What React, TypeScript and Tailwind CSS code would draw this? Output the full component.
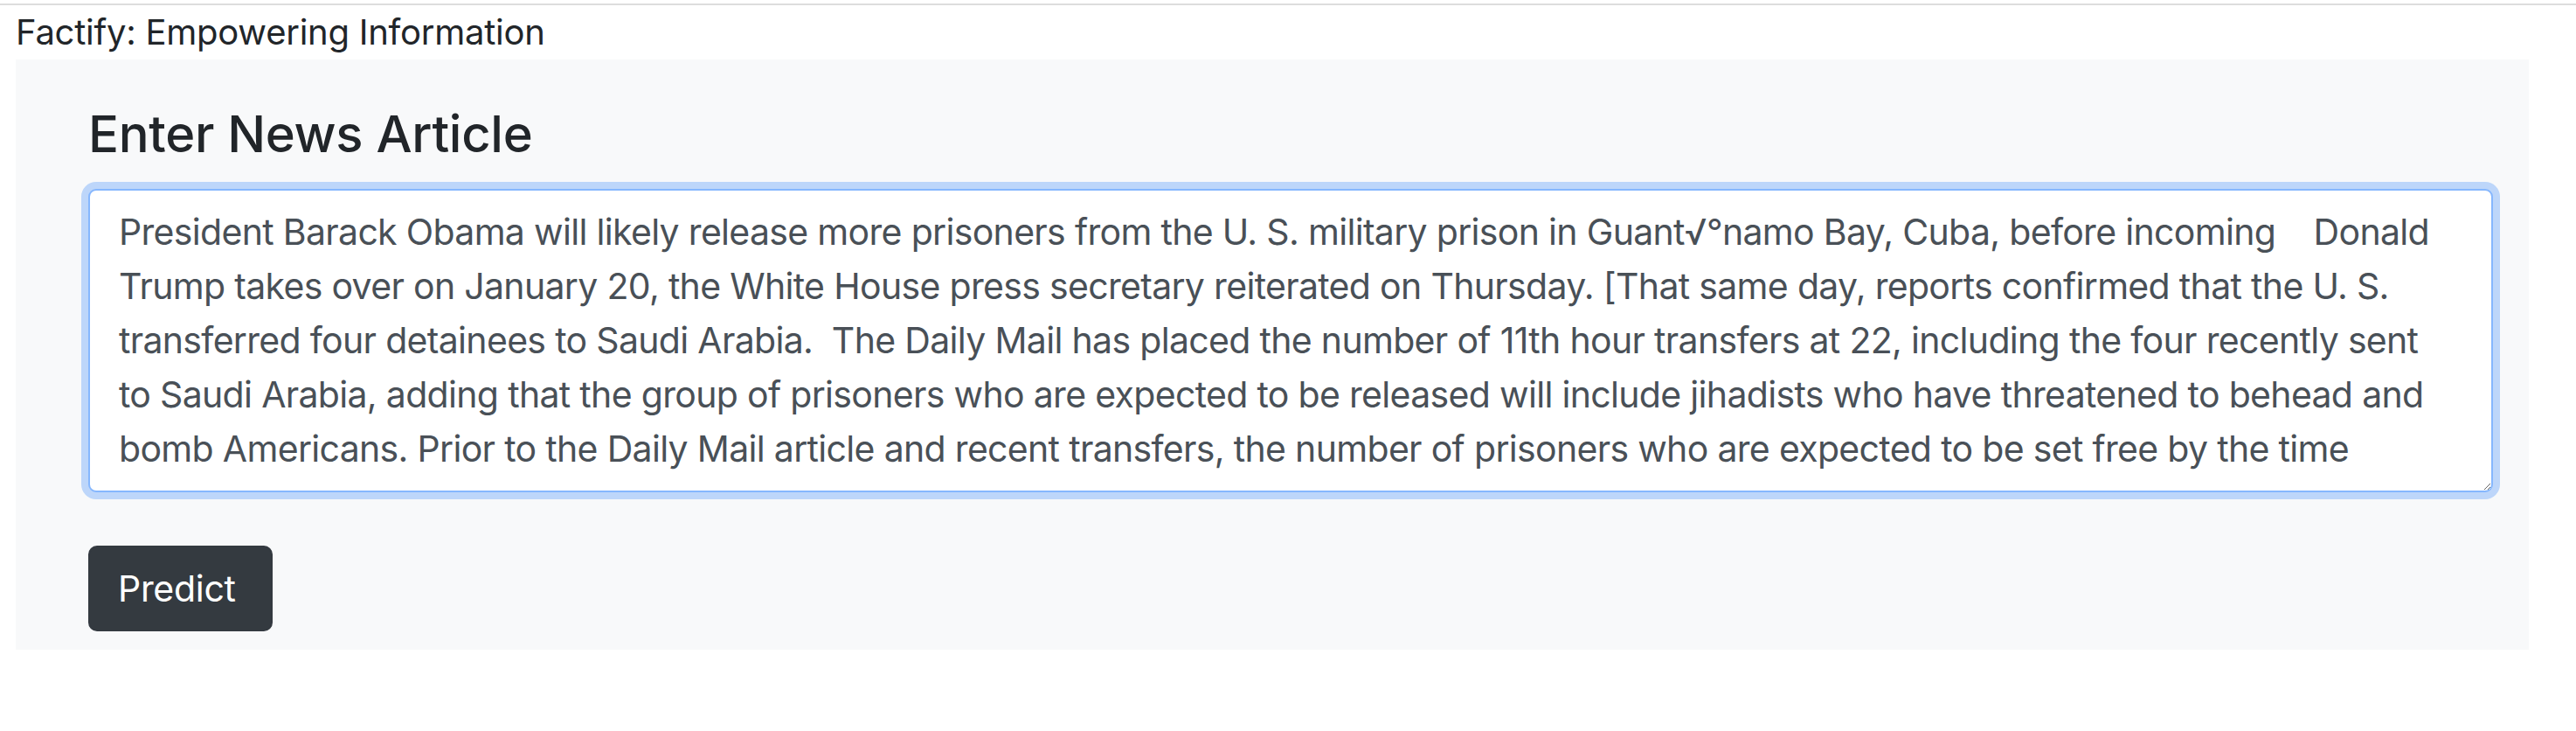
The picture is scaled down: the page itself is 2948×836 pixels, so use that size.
const articleLines = [
  "President Barack Obama will likely release more prisoners from the U. S. military prison in Guant√°namo Bay, Cuba, before incoming    Donald",
  "Trump takes over on January 20, the White House press secretary reiterated on Thursday. [That same day, reports confirmed that the U. S.",
  "transferred four detainees to Saudi Arabia.  The Daily Mail has placed the number of 11th hour transfers at 22, including the four recently sent",
  "to Saudi Arabia, adding that the group of prisoners who are expected to be released will include jihadists who have threatened to behead and",
  "bomb Americans. Prior to the Daily Mail article and recent transfers, the number of prisoners who are expected to be set free by the time",
];

export default function App() {
  return (
    <div className="min-h-screen bg-white pt-1 font-['Inter','Liberation_Sans',sans-serif] text-[#212529]">
      <div className="border-t-2 border-[#dddddd]">
        {/* Header */}
        <div className="pl-[18px] text-[40px] leading-[62px] tracking-[-0.25px]">Factify: Empowering Information</div>

        {/* Form panel */}
        <div className="ml-[18px] w-[2876px] bg-[#f8f9fa] pl-[83px] pr-[41px] pt-[51px] pb-[21px]">
          <h2 className="mb-[27px] text-[58px] font-medium leading-[1.2] tracking-[-0.3px]">Enter News Article</h2>
          <textarea
            className="block h-[347px] w-full rounded-[9px] border-2 border-[#86b7fe] bg-white px-[33px] py-[16px] text-[41px] leading-[62px] tracking-[-0.68px] text-[#495057] shadow-[0_0_0_8px_rgba(13,110,253,0.25)] outline-none"
            defaultValue={articleLines.join("\n")}
            spellCheck={false}
          />
          <button className="mt-[61px] flex h-[98px] w-[211px] items-center justify-start rounded-[10px] border-2 border-[#343a40] bg-[#343a40] pl-[32px] text-[41px] leading-[62px] tracking-[-0.3px] text-white">
            Predict
          </button>
        </div>
      </div>
    </div>
  );
}
